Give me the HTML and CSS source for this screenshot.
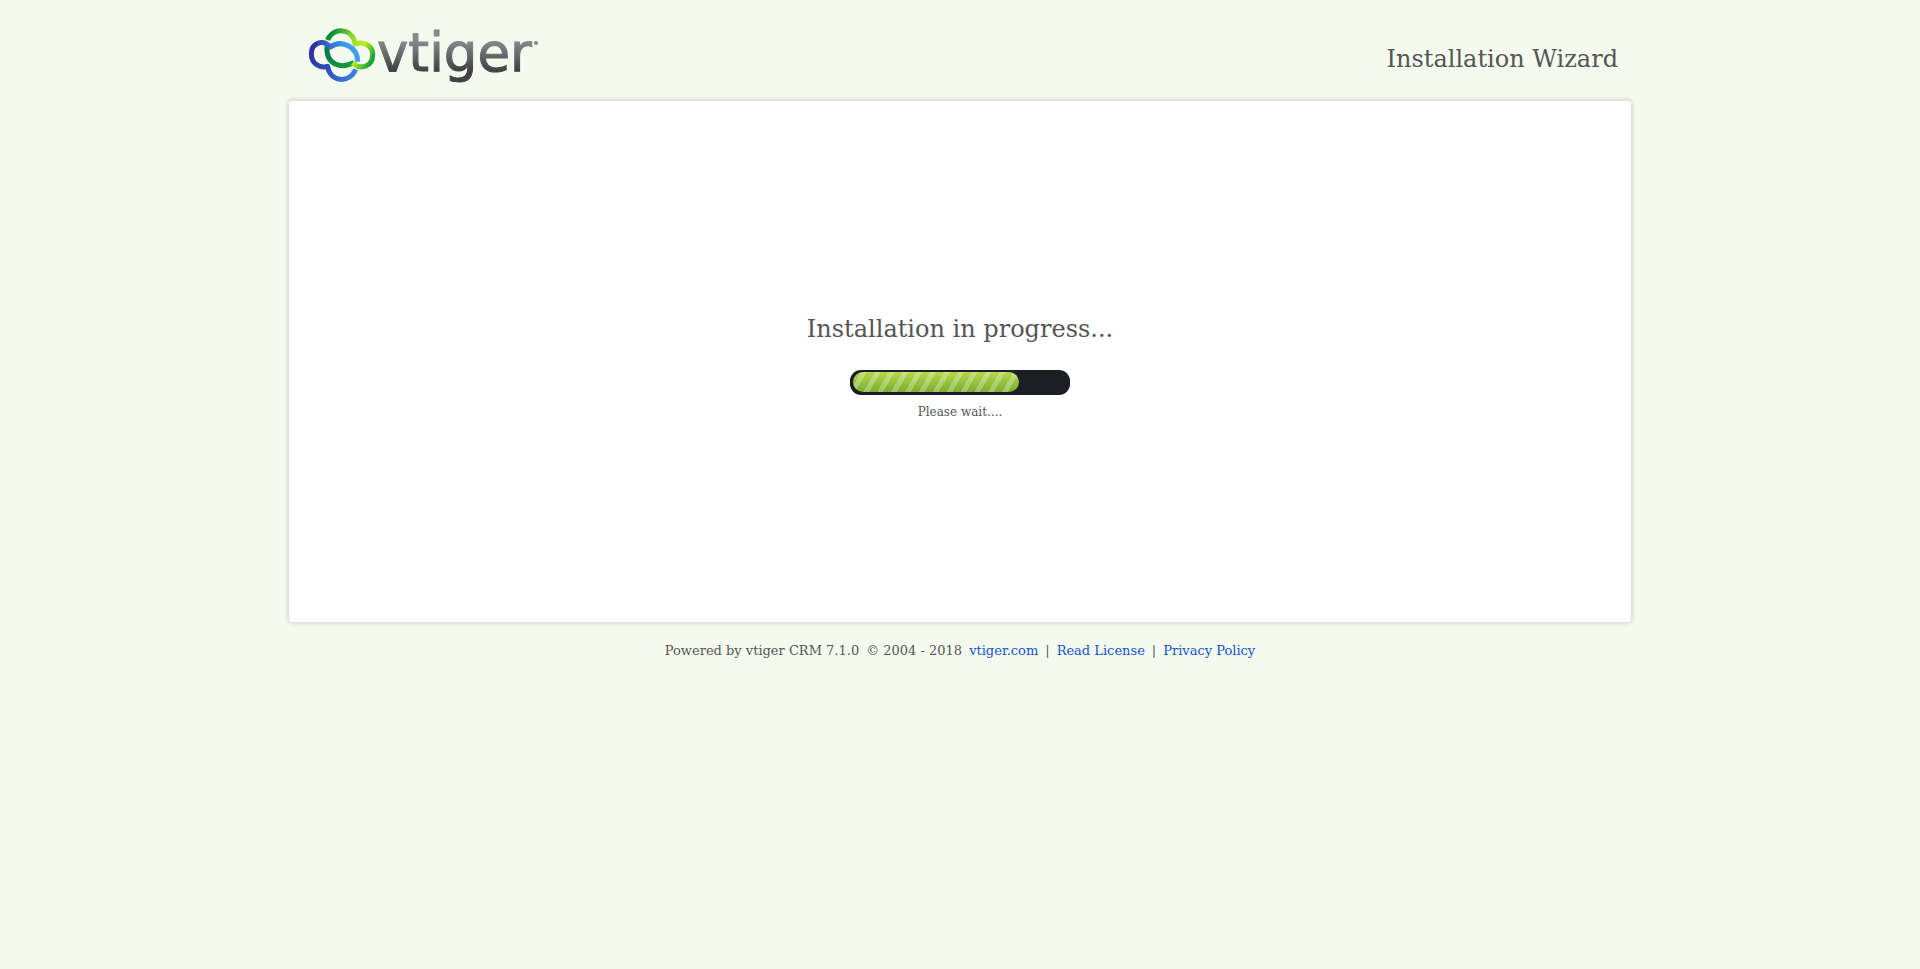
FILE: index.html
```html
<!DOCTYPE html>
<html lang="en">
<head>
<meta charset="utf-8">
<title>Installation Wizard</title>
<link rel="stylesheet" href="styles.css">
</head>
<body>
<div class="page">
  <header class="header">
    <svg class="logo" viewBox="0 -8 248 72" role="img" aria-label="vtiger">
      <defs>
        <linearGradient id="word" gradientUnits="userSpaceOnUse" x1="0" y1="8" x2="0" y2="60">
          <stop offset="0.2" stop-color="#85868a"/><stop offset="0.75" stop-color="#414144"/>
        </linearGradient>
        <linearGradient id="green" gradientUnits="userSpaceOnUse" x1="65" y1="80" x2="150" y2="115">
          <stop offset="0" stop-color="#087a50"/><stop offset="1" stop-color="#12a035"/>
        </linearGradient>
        <linearGradient id="greenTop" gradientUnits="userSpaceOnUse" x1="68" y1="50" x2="195" y2="125">
          <stop offset="0" stop-color="#068c38"/><stop offset="0.4" stop-color="#8cd82c"/><stop offset="0.7" stop-color="#bdf01e"/><stop offset="1" stop-color="#16a43c"/>
        </linearGradient>
        <linearGradient id="blue" gradientUnits="userSpaceOnUse" x1="20" y1="80" x2="155" y2="150">
          <stop offset="0" stop-color="#352fa5"/><stop offset="0.5" stop-color="#2d50c0"/><stop offset="1" stop-color="#3c84dc"/>
        </linearGradient>
        <linearGradient id="blueTop" gradientUnits="userSpaceOnUse" x1="30" y1="75" x2="125" y2="75">
          <stop offset="0" stop-color="#3538ac"/><stop offset="1" stop-color="#38a0ee"/>
        </linearGradient>
      </defs>
      <g transform="scale(0.333333) translate(13 -3)" fill="none" stroke-width="15" stroke-linejoin="round">
        <path stroke="url(#green)" d="M68 70C64 126 112 139 149 118"/>
        <path stroke="url(#greenTop)" d="M70 51C83 12 146 13 152 63C181 53 205 70 205 95C205 130 169 143 145 119"/>
        <path stroke="url(#blue)" d="M40 61C28 66 21 78 21 92C21 121 45 137 70 130C75 177 136 184 154 139"/>
        <path stroke="url(#blueTop)" d="M38 62C53 55 67 60 78 72C112 48 160 72 160 116"/>
      </g>
      <text class="wordmark" x="77" y="47">vtiger</text>
      <circle class="mark" cx="236" cy="19" r="2"/>
    </svg>
    <h1 class="title">Installation Wizard</h1>
  </header>
  <main class="card">
    <h2 class="title">Installation in progress...</h2>
    <div class="bar" role="progressbar" aria-label="Installation in progress"><div class="fill"></div></div>
    <p class="wait">Please wait....</p>
  </main>
  <footer class="footer">
    <span>Powered by vtiger CRM 7.1.0</span>
    <span>© 2004 - 2018</span>
    <a href="#">vtiger.com</a>
    <span>|</span>
    <a href="#">Read License</a>
    <span>|</span>
    <a href="#">Privacy Policy</a>
  </footer>
</div>
</body>
</html>
```

FILE: styles.css
```css
* { box-sizing: border-box; }
body {
  margin: 0;
  background: #f5faee;
  color: #555;
  font-family: "DejaVu Serif", serif;
  font-size: 13px;
  line-height: 20px;
}
.page { width: 70%; margin: 0 auto; }
.header {
  display: flex;
  justify-content: space-between;
  align-items: flex-start;
  padding: 16px 14px 13px 12px;
}
.logo { width: 248px; height: 72px; }
.wordmark {
  font-family: "DejaVu Sans", sans-serif;
  font-size: 53px;
  fill: url(#word);
  stroke: url(#word);
  stroke-width: 1px;
}
.mark { fill: #85868a; }
.title {
  margin: 0;
  font-size: 24px;
  font-weight: 400;
  line-height: 40px;
}
.header .title { margin-top: 23px; }
.card {
  display: flex;
  flex-direction: column;
  align-items: center;
  margin: 0 1px;
  padding: 208px 20px 200px;
  background: #fff;
  border-radius: 2px;
  box-shadow: 0 0 5px 1px #ccc;
}
.bar {
  width: 220px;
  height: 25px;
  margin: 21px 0 7px;
  padding: 2px 3px 3px;
  border-radius: 11px;
  background: #1b1e22;
}
.fill {
  width: 166px;
  height: 20px;
  border-radius: 10px;
  background:
    repeating-linear-gradient(120deg, transparent 0 7px, rgba(255, 255, 255, 0.28) 7px 12px),
    linear-gradient(#b5d84a, #7aae32);
}
.wait { margin: 0; font-size: 12px; }
.footer {
  display: flex;
  flex-wrap: wrap;
  justify-content: center;
  column-gap: 7px;
  padding-top: 19px;
}
.footer a { color: #15c; text-decoration: none; }
```
